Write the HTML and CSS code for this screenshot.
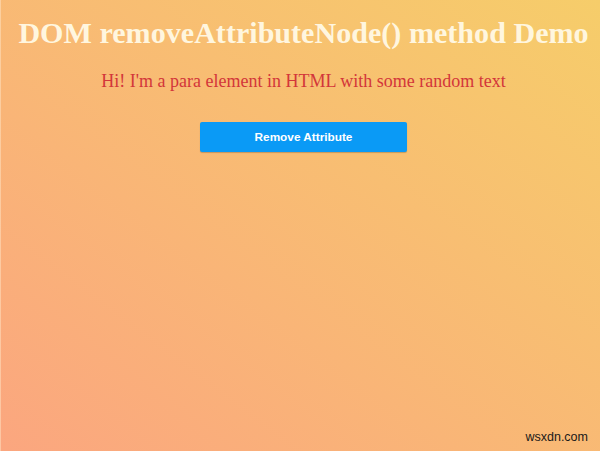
FILE: index.html
```html
<!DOCTYPE html>
<html>
<head>
<meta charset="utf-8">
<link rel="stylesheet" href="styles.css">
</head>
<body>
<div class="page">
  <h1 class="title">DOM removeAttributeNode() method Demo</h1>
  <p class="para">Hi! I'm a para element in HTML with some random text</p>
  <button class="btn">Remove Attribute</button>
  <div class="mark">wsxdn.com</div>
</div>
</body>
</html>
```
FILE: styles.css
```css
html, body {
  margin: 0;
  padding: 0;
  height: 100%;
}
body {
  background: linear-gradient(to right top, #fba67f, #f6cd6a);
  font-family: "Liberation Serif", serif;
}
.page {
  height: 451px;
  display: flex;
  flex-direction: column;
  align-items: center;
  padding-top: 17px;
  padding-left: 6px;
  box-sizing: border-box;
  position: relative;
  border-left: 1px solid rgba(255, 230, 200, 0.5);
}
.title {
  margin: 0;
  font-size: 30.1px;
  font-weight: bold;
  color: #fff6df;
  line-height: 32px;
  white-space: nowrap;
}
.para {
  margin: 21px 0 0 0;
  font-size: 18px;
  color: #d3363a;
  line-height: 22px;
}
.btn {
  margin-top: 30px;
  width: 207px;
  height: 30px;
  border: none;
  border-radius: 2px;
  background: #0a9af6;
  color: #fff;
  font-family: "Liberation Sans", Arial, sans-serif;
  font-weight: bold;
  font-size: 11.8px;
  box-shadow: 0 1px 1px rgba(0,0,0,0.2);
}
.mark {
  position: absolute;
  right: 12px;
  bottom: 7px;
  font-family: "Liberation Sans", Arial, sans-serif;
  font-size: 12.5px;
  color: #1a1a1a;
}
```
